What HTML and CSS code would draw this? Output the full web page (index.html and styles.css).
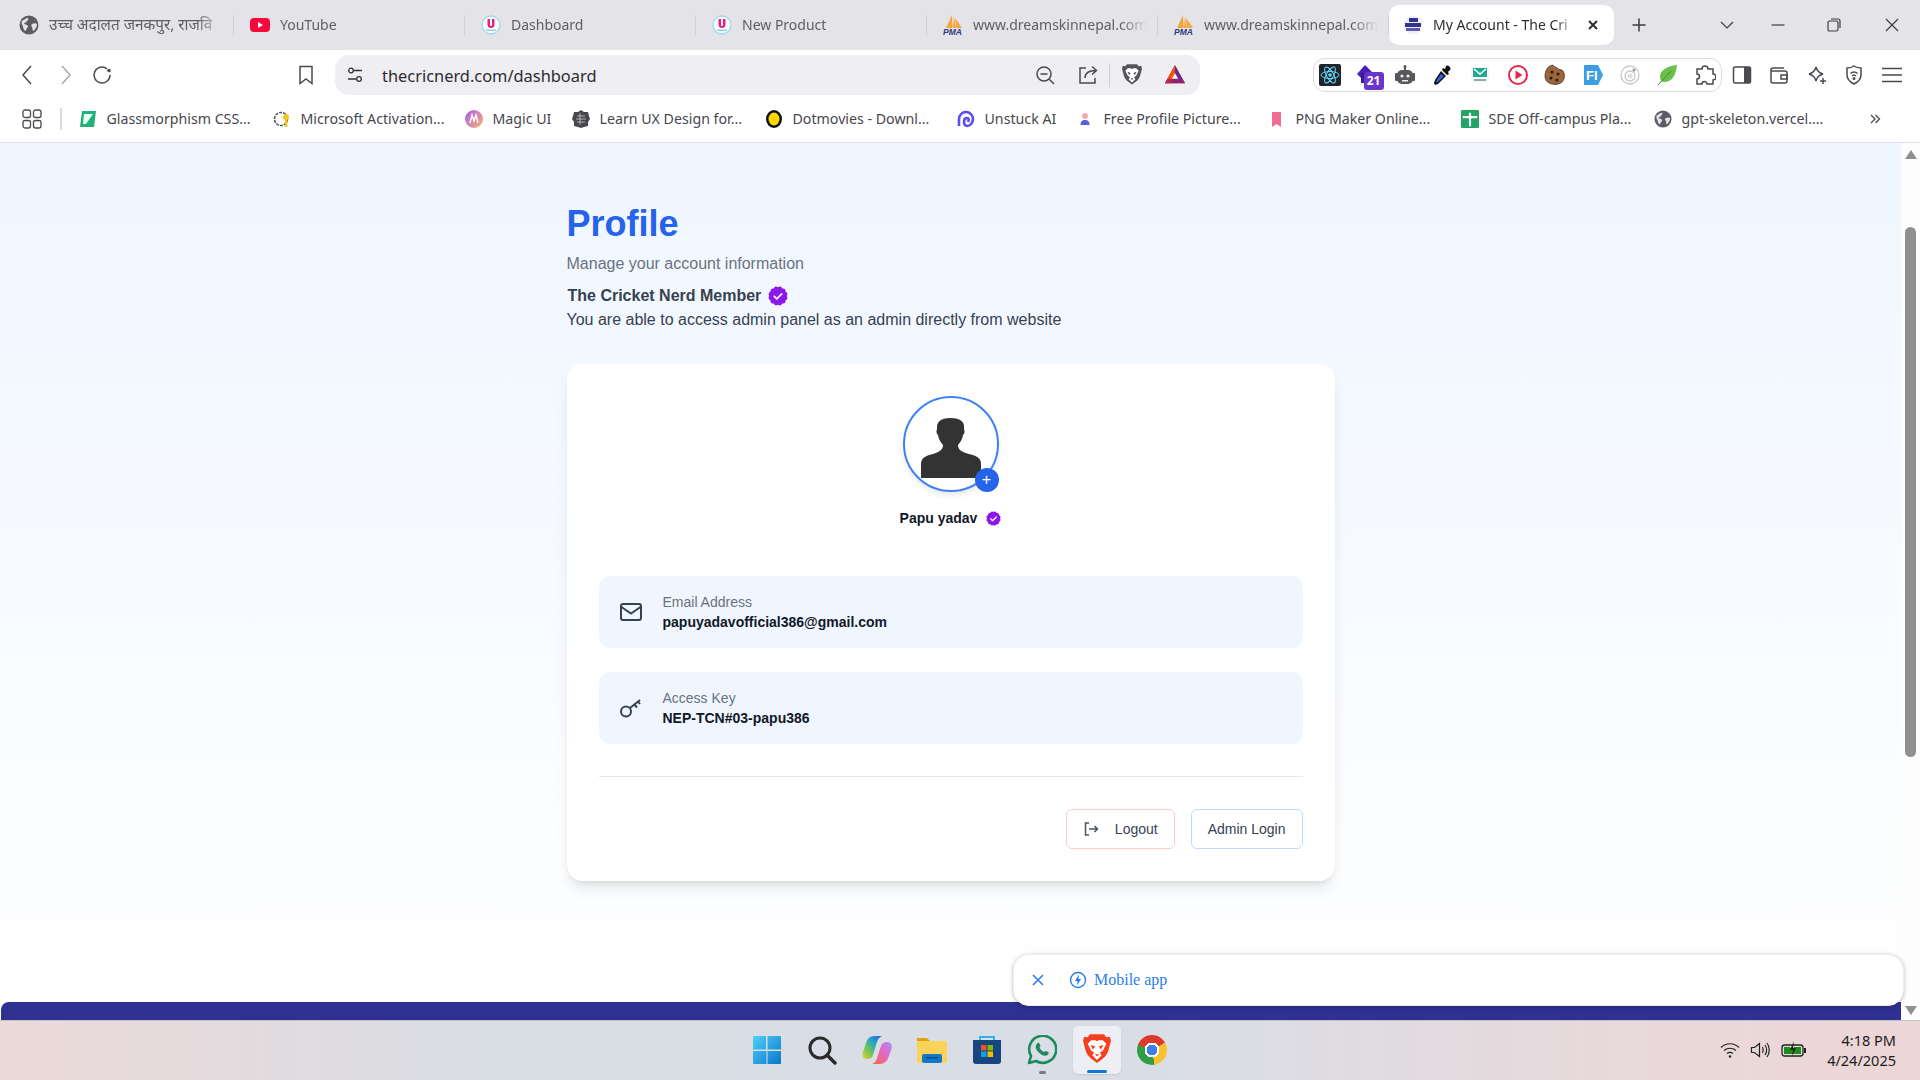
FILE: index.html
```html
<!DOCTYPE html>
<html lang="en">
<head>
<meta charset="utf-8">
<title>My Account - The Cricket Nerd</title>
<link rel="stylesheet" href="styles.css">
</head>
<body>
<svg class="defs" aria-hidden="true">
  <symbol id="globe" viewBox="0 0 20 20"><circle cx="10" cy="10" r="9.500" fill="#5c5c62"/><path d="M3 6c2-1 4-3 6-3 1 1 0 2-1 3s-1 2-3 2c0 2 3 1 4 3 0 2-2 2-2 5-2 0-3-3-3-5-1-1-2-3-1-5zM13 9c2-1 4-1 5 0 0 3-2 6-4 7-1-2 0-3-1-4s-1-2 0-3z" fill="#e3e3e8"/></symbol>
  <symbol id="ulogo" viewBox="0 0 20 20"><circle cx="10" cy="10" r="9" fill="#f4fbff" stroke="#9fd8ec" stroke-width="1.300"/><path d="M6.500 4v5.500c0 2.500 1.500 3.500 3.500 3.500s3.500-1 3.500-3.500V4H11v5.500c0 1-.4 1.500-1 1.500s-1-.5-1-1.500V4z" fill="#ee1f7c"/><rect x="5" y="14.500" width="10" height="1.500" fill="#9ccde0"/></symbol>
  <symbol id="pma" viewBox="0 0 20 20"><path d="M3 13 9 0l.5 13zM10 13l1-11 2 11zM13.500 13 12 3l7 10z" fill="#f6a53a"/><text x="0" y="19.500" class="pma-text">PMA</text></symbol>
  <symbol id="badge" viewBox="0 0 24 24"><g fill="#8d17ea"><rect x="3" y="3" width="18" height="18" rx="3"/><rect x="3" y="3" width="18" height="18" rx="3" transform="rotate(30 12 12)"/><rect x="3" y="3" width="18" height="18" rx="3" transform="rotate(60 12 12)"/></g><path d="m7.500 12.500 3 3 6-6" fill="none" stroke="#fff" stroke-width="2" stroke-linecap="round" stroke-linejoin="round"/></symbol>
  <symbol id="lion" viewBox="0 0 24 28"><path d="M6 1h12l2 2.500 3-.5 1 3.500-2 7.500c-1 4-3 6.500-6 8.500l-4 3-4-3c-3-2-5-4.500-6-8.500L0 6.500 1 3l3 .5z"/><path d="M7 6h3.500L12 7l1.500-1H17l3 3-3 6-2.500 1.500 1.500 2.500-4 4-4-4 1.500-2.500L7 15 4 9z" fill="#fff"/><path d="m6.500 10 4 1.500-2 2.500zM17.500 10l-4 1.500 2 2.500zM10 18h4l-2 2z"/></symbol>
</svg>

<div class="screen">
  <header class="tabbar">
    <div class="tab"><svg class="fav"><use href="#globe"/></svg><span class="tab-title tab-title-hi">उच्च अदालत जनकपुर, राजवि</span></div>
    <div class="tab"><svg class="fav" viewBox="0 0 20 20"><rect y="3" width="20" height="14" rx="4" fill="#f6093b"/><path d="m8 7 5 3-5 3z" fill="#fff"/></svg><span class="tab-title">YouTube</span></div>
    <div class="tab"><svg class="fav"><use href="#ulogo"/></svg><span class="tab-title">Dashboard</span></div>
    <div class="tab"><svg class="fav"><use href="#ulogo"/></svg><span class="tab-title">New Product</span></div>
    <div class="tab"><svg class="fav"><use href="#pma"/></svg><span class="tab-title">www.dreamskinnepal.com</span></div>
    <div class="tab"><svg class="fav"><use href="#pma"/></svg><span class="tab-title">www.dreamskinnepal.com</span></div>
    <div class="tab tab-active">
      <svg class="fav" viewBox="0 0 20 20"><circle cx="10" cy="10" r="9.500" fill="#f0f0f6"/><rect x="6" y="3" width="9" height="4" fill="#33338f"/><rect x="2" y="8" width="16" height="4" fill="#33338f"/><rect x="3" y="13" width="14" height="3" fill="#5a5ab0"/></svg>
      <span class="tab-title">My Account - The Cri</span>
      <svg class="tab-close" viewBox="0 0 12 12"><path d="m2 2 8 8M10 2l-8 8"/></svg>
    </div>
    <svg class="win-icon plus" viewBox="0 0 16 16"><path d="M8 1.500v13M1.500 8h13"/></svg>
    <svg class="win-icon chev" viewBox="0 0 16 16"><path d="m2 5 6 6 6-6"/></svg>
    <svg class="win-icon min" viewBox="0 0 16 16"><path d="M1.500 8h13"/></svg>
    <svg class="win-icon rest" viewBox="0 0 16 16"><rect x="2" y="4" width="10" height="10" rx="1.500"/><path d="M5 2h7a2 2 0 0 1 2 2v7"/></svg>
    <svg class="win-icon close" viewBox="0 0 16 16"><path d="m2 2 12 12M14 2 2 14"/></svg>
  </header>

  <nav class="toolbar">
    <button class="nav-btn"><svg class="ti" viewBox="0 0 20 20"><path d="m13 1-8 9 8 9"/></svg></button>
    <button class="nav-btn"><svg class="ti ti-off" viewBox="0 0 20 20"><path d="m7 1 8 9-8 9"/></svg></button>
    <button class="nav-btn"><svg class="ti" viewBox="0 0 20 20"><path d="M18 10a8 8 0 1 1-3-6.200"/><circle cx="17" cy="5.500" r="1.800" class="ti-dot"/></svg></button>
    <button class="nav-btn nav-mark"><svg class="ti" viewBox="0 0 20 20"><path d="M4 1.500h12v17L10 14l-6 4.500z"/></svg></button>
    <div class="omnibox">
      <svg class="tune" viewBox="0 0 18 18"><circle cx="5" cy="4.500" r="2.300"/><path d="M8 4.500h8M2 13h8"/><circle cx="13" cy="13" r="2.300"/></svg>
      <span class="url">thecricnerd.com/dashboard</span>
      <div class="omni-actions">
        <svg class="ti omni-zoom" viewBox="0 0 20 20"><circle cx="9" cy="9" r="7"/><path d="M5.500 9h7M14 14l5 5"/></svg>
        <svg class="ti omni-share" viewBox="0 0 20 20"><path d="M8 3H2v15h15v-5M7 13c0-5 4-7.500 11-7.500M14 1.500l4.500 4-4.500 4"/></svg>
        <span class="omni-sep"></span>
        <svg class="omni-shield"><use href="#lion" fill="#55555c"/></svg>
        <svg class="omni-bat" viewBox="0 0 24 24"><path d="M12 1 23 21H1z" fill="#662d91"/><path d="M12 1 1 21h6l5-9z" fill="#ff5000"/><path d="M1 21h22l-3-5H4z" fill="#9e1f63" opacity=".8"/><path d="m12 10-3.500 6h7z" fill="#fff"/></svg>
      </div>
    </div>
    <div class="ext-pill">
      <span class="ext"><svg viewBox="0 0 22 22"><rect width="22" height="22" rx="2" fill="#20232a"/><g fill="none" stroke="#61dafb"><ellipse cx="11" cy="11" rx="9" ry="3.500"/><ellipse cx="11" cy="11" rx="9" ry="3.500" transform="rotate(60 11 11)"/><ellipse cx="11" cy="11" rx="9" ry="3.500" transform="rotate(120 11 11)"/></g><circle cx="11" cy="11" r="1.800" fill="#61dafb"/></svg></span>
      <span class="ext"><svg viewBox="0 0 22 22"><path d="m0 10 8-9 8 8-8 9z" fill="#4a1fb8"/><rect x="4" y="9" width="14" height="10" fill="#3a1a90"/></svg><span class="ext-badge">21</span></span>
      <span class="ext"><svg viewBox="0 0 22 22"><circle cx="11" cy="2.500" r="1.500" fill="#555"/><rect x="10" y="3" width="2" height="4" fill="#555"/><rect x="1" y="9" width="3" height="8" rx="1" fill="#555"/><rect x="18" y="9" width="3" height="8" rx="1" fill="#555"/><rect x="3" y="6" width="16" height="14" rx="5" fill="#57575c"/><circle cx="8" cy="12" r="1.600" fill="#eee"/><circle cx="14" cy="12" r="1.600" fill="#eee"/><rect x="8" y="16" width="6" height="1.500" fill="#eee"/></svg></span>
      <span class="ext"><svg viewBox="0 0 22 22"><path d="M14 2c2-2 6 2 4 4l-2 2 1 2-2 1-5-5 1-2 2 1z" fill="#111"/><path d="m9 7 5 5-8 8-3 1-1-2 1-3z" fill="#111"/><path d="m9 10 3 2-6 6-2 .5.5-2z" fill="#3d5ee0"/></svg></span>
      <span class="ext"><svg viewBox="0 0 22 22"><rect x="2" y="3" width="18" height="15" fill="#f1f8f6"/><path d="M4 4h14v9H4z" fill="#21a98f"/><path d="m5 5 6 5 6-5" fill="none" stroke="#fff" stroke-width="1.400"/><rect x="5" y="15" width="12" height="2" fill="#8aa"/></svg></span>
      <span class="ext"><svg viewBox="0 0 22 22"><circle cx="11" cy="11" r="9" fill="none" stroke="#e5254b" stroke-width="2"/><path d="m8.500 6.500 7 4.500-7 4.500z" fill="#e5254b"/></svg></span>
      <span class="ext"><svg viewBox="0 0 22 22"><path d="M9 1c1 3 3 1 4 3 2 2 4 1 6 3 2 3 2 8-1 11s-9 3-13 1S0 12 2 7s4-5 7-6z" fill="#a1653a" stroke="#222" stroke-width=".7"/><g fill="#222"><circle cx="8" cy="8" r="1.600"/><circle cx="14" cy="10" r="1.600"/><circle cx="7" cy="14" r="1.600"/><circle cx="13" cy="16" r="1.600"/></g></svg></span>
      <span class="ext"><svg viewBox="0 0 22 22"><path d="M2 1h14l5 10-5 10H2z" fill="#3c9fe3"/><text x="4" y="16" class="ext-fi">FI</text></svg></span>
      <span class="ext"><svg viewBox="0 0 22 22"><g fill="none" stroke="#c8c8c8" stroke-width="1.300"><circle cx="11" cy="11" r="9"/><circle cx="11" cy="12" r="5"/></g><circle cx="11" cy="12" r="2.500" fill="#ddd"/><circle cx="15" cy="6" r="1.500" fill="#999"/></svg></span>
      <span class="ext"><svg viewBox="0 0 22 22"><path d="M20 1C10 2 3 6 3 13c0 2 1 4 3 5 8 1 13-6 14-17z" fill="#6cc04a"/><path d="M1 21 14 7" stroke="#3e8e2e" fill="none"/></svg></span>
      <span class="ext"><svg class="ti" viewBox="0 0 22 22"><path d="M8 5a3 3 0 0 1 6 0h5v5a3 3 0 0 1 0 6v4h-6a2.500 2.500 0 0 0-5 0H3v-5a2.500 2.500 0 0 0 0-5V5z"/></svg></span>
    </div>
    <div class="tool-actions">
      <span class="tool"><svg class="ti" viewBox="0 0 20 20"><rect x="1.500" y="2" width="17" height="16" rx="1.500"/><rect x="12" y="2" width="6.500" height="16" class="ti-dot"/></svg></span>
      <span class="tool"><svg class="ti" viewBox="0 0 20 20"><path d="M15 3H4a2 2 0 0 0-2 2v11a2 2 0 0 0 2 2h12a2 2 0 0 0 2-2V8a2 2 0 0 0-2-2H2"/><rect x="12" y="10" width="6" height="4"/></svg></span>
      <span class="tool"><svg class="ti" viewBox="0 0 20 20"><path d="M9 2c1 4 3 6 7 7-4 1-6 3-7 7-1-4-3-6-7-7 4-1 6-3 7-7z"/><path d="M16 13v6M13 16h6"/></svg></span>
      <span class="tool"><svg class="ti" viewBox="0 0 20 20"><path d="M10 1c2 1.500 4 2 7 2v7c0 4-3 7-7 9-4-2-7-5-7-9V3c3 0 5-.5 7-2z"/><path d="M6.500 8.500c2-2 5-2 7 0M8 11c1-1 3-1 4 0"/><circle cx="10" cy="13.500" r=".8"/></svg></span>
      <span class="tool"><svg class="ti" viewBox="0 0 20 20"><path d="M0 3.500h20M0 10h20M0 16.500h20"/></svg></span>
    </div>
  </nav>

  <div class="bookmarks">
    <svg class="apps" viewBox="0 0 20 20"><rect x="1" y="1" width="7.500" height="7.500" rx="2"/><rect x="11.500" y="1" width="7.500" height="7.500" rx="2"/><rect x="1" y="11.500" width="7.500" height="7.500" rx="2"/><rect x="11.500" y="11.500" width="7.500" height="7.500" rx="2"/></svg>
    <span class="bm-sep"></span>
    <div class="bm-grid">
      <a class="bm"><svg class="bm-ico" viewBox="0 0 18 18"><path d="M3 1h14l-2 16H1z" fill="#21b27a"/><path d="M5 4h9l-7 10H4z" fill="#eafff5"/></svg>Glassmorphism CSS...</a>
      <a class="bm"><svg class="bm-ico" viewBox="0 0 18 18"><circle cx="8" cy="9" r="6.500" fill="none" stroke="#555" stroke-width="1.600" stroke-dasharray="3 1"/><circle cx="13" cy="7" r="3" fill="#f5c518"/><rect x="12" y="8" width="2.400" height="9" fill="#f5c518"/></svg>Microsoft Activation...</a>
      <a class="bm"><svg class="bm-ico" viewBox="0 0 18 18"><defs><linearGradient id="gm" x1="0" y1="0" x2="1" y2="1"><stop offset="0" stop-color="#a65cf5"/><stop offset="1" stop-color="#ffb36b"/></linearGradient></defs><circle cx="9" cy="9" r="9" fill="url(#gm)"/><path d="M5 13 7 5l2 6 2-6 2 8" fill="none" stroke="#fff" stroke-width="1.400"/></svg>Magic UI</a>
      <a class="bm"><svg class="bm-ico" viewBox="0 0 18 18"><path d="M9 0l3 2 4 0 1 4 1 3-2 3 0 4-4 1-3 1-3-1-4-1 0-4-2-3 1-3 1-4 4 0z" fill="#47474c"/><path d="M5 6h8M4 9h10M5 12h8M8 3v12" stroke="#ddd" stroke-width=".7"/></svg>Learn UX Design for...</a>
      <a class="bm"><svg class="bm-ico" viewBox="0 0 18 18"><ellipse cx="9" cy="9" rx="8" ry="9" fill="#111"/><ellipse cx="9" cy="9" rx="5.500" ry="6.500" fill="#ffd600"/></svg>Dotmovies - Downl...</a>
      <a class="bm"><svg class="bm-ico" viewBox="0 0 18 18"><path d="M2 16V9a7 7 0 0 1 14 0c0 4-3 7-6 7-2 0-3-2-3-4s1-4 3-4 2 2 1 4" fill="none" stroke="#5a4df0" stroke-width="2.600"/></svg>Unstuck AI</a>
      <a class="bm"><svg class="bm-ico" viewBox="0 0 18 18"><circle cx="9" cy="6" r="3" fill="#f4a9b0"/><path d="M4.500 15c0-4 2-5 4.500-5s4.500 1 4.500 5z" fill="#5561e0"/></svg>Free Profile Picture...</a>
      <a class="bm"><svg class="bm-ico" viewBox="0 0 18 18"><path d="M4 2h9v15l-4.500-3L4 17z" fill="#f26b93"/></svg>PNG Maker Online...</a>
      <a class="bm"><svg class="bm-ico" viewBox="0 0 20 20"><rect width="20" height="20" rx="1.500" fill="#23a566"/><path d="M2 8h16M10 3v15" stroke="#fff" stroke-width="2.400"/></svg>SDE Off-campus Pla...</a>
      <a class="bm"><svg class="bm-ico"><use href="#globe"/></svg>gpt-skeleton.vercel....</a>
    </div>
    <svg class="bm-more" viewBox="0 0 12 12"><path d="m2 2 4 4-4 4M6.500 2l4 4-4 4"/></svg>
  </div>

  <div class="viewport">
    <div class="page">
      <main class="content">
        <h1 class="title">Profile</h1>
        <p class="subtitle">Manage your account information</p>
        <p class="member"><strong>The Cricket Nerd Member</strong><svg class="badge-lg"><use href="#badge"/></svg></p>
        <p class="access">You are able to access admin panel as an admin directly from website</p>

        <section class="card">
          <div class="avatar-wrap">
            <div class="avatar">
              <svg viewBox="2 2 92 92"><path d="M18 82V68c0-6 4-8 12-10 6-2 10-4 10-9-3-3-4.500-7-5-10-1.500-1-2-4-1-6-.5-7 3-11 13.500-11S62 26 61 33c1 2 .5 5-1 6-.5 3-2 7-5 10 0 5 4 7 11 9 8 2 12 4 12 10v14z" fill="#333"/></svg>
            </div>
            <span class="avatar-add">+</span>
          </div>
          <div class="name-row"><span class="name">Papu yadav</span><svg class="badge-sm"><use href="#badge"/></svg></div>

          <div class="info-row">
            <svg class="info-ico" viewBox="0 0 24 24"><rect x="2" y="4" width="20" height="16" rx="2"/><path d="m2.500 7 9.500 6.500L21.500 7"/></svg>
            <div><div class="info-label">Email Address</div><div class="info-value">papuyadavofficial386@gmail.com</div></div>
          </div>
          <div class="info-row">
            <svg class="info-ico" viewBox="0 0 24 24"><circle cx="7" cy="15.500" r="5"/><path d="m11 12 10-8M15.500 8.500l2.500 3M19 5.500l2 2.500"/></svg>
            <div><div class="info-label">Access Key</div><div class="info-value">NEP-TCN#03-papu386</div></div>
          </div>

          <div class="card-actions">
            <button class="btn btn-red"><svg class="btn-ico" viewBox="0 0 16 16"><path d="M6 2H2.500v12H6M6 8h8.500M11.500 5l3 3-3 3"/></svg>Logout</button>
            <button class="btn btn-blue">Admin Login</button>
          </div>
        </section>
      </main>
      <div class="footer-strip"></div>
    </div>
    <aside class="scrollbar">
      <span class="arrow-up"></span>
      <span class="thumb"></span>
      <span class="arrow-down"></span>
    </aside>
    <div class="popup">
      <svg class="popup-x" viewBox="0 0 14 14"><path d="m2 2 10 10M12 2 2 12"/></svg>
      <svg class="popup-bolt" viewBox="0 0 18 18"><circle cx="9" cy="9" r="7.500"/><path d="M10 3.500 6 10h2.500L8 14.500l4-6.500H9.500z" class="popup-fill"/></svg>
      <span class="popup-text">Mobile app</span>
    </div>
  </div>

  <footer class="taskbar">
    <div class="task-icons">
      <span class="task"><svg viewBox="0 0 30 30"><defs><linearGradient id="win" x1="0" y1="0" x2="1" y2="1"><stop offset="0" stop-color="#4fd0fb"/><stop offset="1" stop-color="#0a76c9"/></linearGradient></defs><path d="M1 2a1 1 0 0 1 1-1h12v13.500H1zM15.500 1H28a1 1 0 0 1 1 1v12.500H15.500zM1 16h13.500v13H2a1 1 0 0 1-1-1zM15.500 16H29v12a1 1 0 0 1-1 1H15.500z" fill="url(#win)"/></svg></span>
      <span class="task"><svg viewBox="0 0 30 30"><circle cx="13" cy="13" r="10" fill="none" stroke="#2a2a2a" stroke-width="3"/><path d="m20 20 8 8" stroke="#2a2a2a" stroke-width="3.400" stroke-linecap="round"/></svg></span>
      <span class="task"><svg viewBox="0 0 30 30"><defs><linearGradient id="co1" x1="0" y1="1" x2="1" y2="0"><stop offset="0" stop-color="#f2c83c"/><stop offset=".3" stop-color="#7fc94a"/><stop offset=".65" stop-color="#1fa3c9"/><stop offset="1" stop-color="#2a5ce0"/></linearGradient><linearGradient id="co2" x1="0" y1="1" x2="1" y2="0"><stop offset="0" stop-color="#f5663c"/><stop offset=".6" stop-color="#e06ad0"/><stop offset="1" stop-color="#a98df5"/></linearGradient></defs><path d="M12 1h8c-3 1-5 4-6 9l-3 10c-1 3-3 4-6 4-4 0-5-3-4-7l3-9c1-4 4-7 8-7z" fill="url(#co1)"/><path d="M18 29h-8c3-1 5-4 6-9l3-9c1-3 3-4 6-4 4 0 5.500 3 4.500 7l-3 8c-1 4-4.500 7-8.500 7z" fill="url(#co2)"/></svg></span>
      <span class="task"><svg viewBox="0 0 30 30"><path d="M0 3h10l3 3h17v6H0z" fill="#e0a208"/><rect y="6" width="30" height="22" fill="#fbd35a"/><rect x="5" y="19" width="20" height="9" rx="2" fill="#1277c9"/><rect x="9" y="22" width="12" height="1.500" fill="#0b4a86"/></svg></span>
      <span class="task"><svg viewBox="0 0 30 30"><path d="M8 6V2h14v4" fill="none" stroke="#27b5ea" stroke-width="1.800"/><path d="M1 5h28v21a3 3 0 0 1-3 3H4a3 3 0 0 1-3-3z" fill="#17457f"/><rect x="9" y="10" width="5.500" height="5.500" fill="#f25022"/><rect x="15.500" y="10" width="5.500" height="5.500" fill="#7fba00"/><rect x="9" y="16.500" width="5.500" height="5.500" fill="#00a4ef"/><rect x="15.500" y="16.500" width="5.500" height="5.500" fill="#ffb900"/></svg></span>
      <span class="task task-running"><svg viewBox="0 0 30 30"><path d="M2 28l2-7a13.500 13.500 0 1 1 5 5z" fill="none" stroke="#1c8a5c" stroke-width="2.600" stroke-linejoin="round"/><path d="M10 8.500c1-1 2-1 2.500 0l1 2.500-1 1.500c1 2 2.500 3.500 4.500 4.500l1.500-1 2.500 1c1 .5 1 1.500 0 2.500-2 2-5 1.500-8-1s-5-5-4-8c.2-.8.7-1.500 1.500-2.500z" fill="#1c8a5c"/></svg></span>
      <span class="task task-active"><svg class="task-lion"><use href="#lion" fill="#f4401f"/></svg></span>
      <span class="task"><span class="chrome"></span></span>
    </div>
    <div class="tray">
      <svg class="tray-ico" viewBox="0 0 20 20"><path d="M1 7.500c5-5 13-5 18 0M4 10.500c3.500-3 8.500-3 12 0M7 13.500c2-1.500 4-1.500 6 0"/><circle cx="10" cy="16.500" r="1.200" class="tray-fill"/></svg>
      <svg class="tray-ico" viewBox="0 0 20 20"><path d="M1.500 7.500h3l5-4v13l-5-4h-3zM12.500 7c1 2 1 4 0 6M15 5c2 3 2 7 0 10M17 3c3 4 3 10 0 14"/></svg>
      <svg class="tray-bat" viewBox="0 0 26 18"><rect x="1" y="4" width="21" height="11" rx="2.500" fill="none" stroke="#222" stroke-width="1.300"/><rect x="23" y="7" width="2" height="5" fill="#222"/><path d="M3 6h6l2 3 2-3h7v7H3z" fill="#1b8f1b"/><path d="M13 0 9 9h3l-1 6 4-8h-3z" fill="#222"/></svg>
      <div class="clock"><div>4:18 PM</div><div>4/24/2025</div></div>
    </div>
  </footer>
</div>
</body>
</html>
```
FILE: styles.css
```css
* { box-sizing: border-box; }
html, body { margin: 0; padding: 0; height: 100%; overflow: hidden; }
body { font-family: "Liberation Sans", Arial, sans-serif; background: #fff; }
.defs { display: none; }
.screen { width: 1920px; height: 1080px; display: flex; flex-direction: column; overflow: hidden; }

/* tab strip */
.tabbar { height: 50px; flex: none; background: #e3e3e8; display: flex; align-items: center; padding-left: 3px; font-family: "Noto Sans", sans-serif; font-size: 14px; color: #5e5e64; }
.tab { width: 231px; height: 20px; flex: none; display: flex; align-items: center; gap: 10px; padding-left: 16px; padding-right: 10px; border-right: 1px solid #cfcfd5; white-space: nowrap; }
.fav { width: 20px; height: 20px; flex: none; }
.tab-title { display: block; flex: 1; min-width: 0; padding-bottom: 2px; overflow: hidden; -webkit-mask-image: linear-gradient(to right, #000 85%, transparent); mask-image: linear-gradient(to right, #000 85%, transparent); }
.tab-title-hi { font-size: 15.300px; }
.tab-active { width: 225px; height: 40px; background: #fff; border: 0; border-radius: 10px; padding-left: 14px; padding-right: 15px; color: #2e2e33; }
.tab-close { width: 12px; height: 12px; flex: none; fill: none; stroke: #2e2e33; stroke-width: 2; }
.pma-text { font: italic bold 8.500px "Liberation Sans", sans-serif; fill: #2e3a7c; }
.win-icon { width: 16px; height: 16px; flex: none; fill: none; stroke: #3c3c42; stroke-width: 1.200; }
.plus { margin-left: 17px; stroke-width: 1.500; }
.chev { margin-left: 72px; }
.min { margin-left: 35px; }
.rest { margin-left: 40px; }
.close { margin-left: 42px; }

/* toolbar */
.toolbar { height: 45px; flex: none; padding: 5px 0 0 9.500px; display: flex; align-items: center; background: #fff; }
.nav-btn { width: 37px; height: 40px; padding: 0; border: 0; background: none; display: flex; align-items: center; justify-content: center; flex: none; }
.ti { width: 20px; height: 20px; fill: none; stroke: #4a4a50; stroke-width: 1.500; flex: none; }
.ti-off { stroke: #a9a9ae; }
.ti-dot { fill: #4a4a50; stroke: none; }
.nav-mark { margin-left: 167px; }
.omnibox { width: 865px; height: 40px; margin-left: 10.500px; flex: none; background: #eeeef3; border-radius: 14px; display: flex; align-items: center; padding: 0 14px 0 11px; }
.tune { width: 18px; height: 18px; flex: none; fill: none; stroke: #333; stroke-width: 1.300; }
.url { margin-left: 18px; font-family: "Noto Sans", sans-serif; font-size: 16.400px; color: #2c2c30; }
.omni-actions { margin-left: auto; display: flex; align-items: center; }
.omni-share { margin-left: 23px; }
.omni-sep { width: 1px; height: 24px; margin-left: 11px; background: #d0d0d6; }
.omni-shield { width: 20px; height: 24px; margin-left: 12px; }
.omni-bat { width: 22px; height: 22px; margin-left: 22px; }
.ext-pill { width: 409px; height: 34px; margin-left: 113px; flex: none; border: 1px solid #dcdce0; border-radius: 12px; display: flex; align-items: center; justify-content: space-between; }
.ext { width: 32px; height: 22px; flex: none; display: flex; justify-content: center; position: relative; }
.ext svg { width: 22px; height: 22px; }
.ext-badge { position: absolute; left: 12px; top: 8px; width: 20px; height: 18px; background: #6a35c9; color: #fff; font: bold 12px/18px "Noto Sans", sans-serif; text-align: center; border-radius: 3px; }
.ext-fi { font: bold 13px "Liberation Sans", sans-serif; fill: #fff; }
.tool-actions { display: flex; margin-left: 1px; }
.tool { width: 37.500px; display: flex; justify-content: center; }

/* bookmarks */
.bookmarks { height: 48px; flex: none; display: flex; align-items: center; background: #fff; border-bottom: 1px solid #dfdfe6; padding-left: 22px; font-family: "Noto Sans", sans-serif; font-size: 14.200px; color: #47474d; }
.apps { width: 20px; height: 20px; flex: none; fill: none; stroke: #4a4a50; stroke-width: 1.300; }
.bm-sep { width: 2px; height: 22px; margin-left: 18px; background: #dcdce0; flex: none; }
.bm-grid { margin-left: 17px; display: grid; grid-template-columns: 194px 192px 107px 193px 192px 119px 192px 193px 193px 196px; }
.bm { display: flex; align-items: center; gap: 9.500px; white-space: nowrap; }
.bm-ico { width: 18px; height: 18px; flex: none; }
.bm-more { width: 12px; height: 12px; flex: none; margin-left: 19px; fill: none; stroke: #4a4a50; stroke-width: 1.300; }

/* page */
.viewport { flex: 1; min-height: 0; display: flex; position: relative; }
.page { flex: 1; min-width: 0; display: flex; flex-direction: column; background: linear-gradient(to bottom, #eff6ff, #fff); }
.content { flex: 1; width: 768px; margin: 0 auto; padding-top: 61px; }
.title { margin: 0 0 8px; font-size: 36px; line-height: 40px; font-weight: 700; color: #2563eb; }
.subtitle { margin: 0 0 8px; font-size: 16px; line-height: 24px; color: #6b7280; }
.member { margin: 0; padding-left: 1px; font-size: 16px; line-height: 24px; color: #374151; display: flex; align-items: center; gap: 7px; }
.badge-lg { width: 20px; height: 20px; }
.access { margin: 0 0 32px; font-size: 16px; line-height: 24px; color: #374151; }
.card { background: #fff; border-radius: 16px; padding: 32px; box-shadow: 0 10px 15px -3px rgba(0,0,0,.1), 0 4px 6px -4px rgba(0,0,0,.1); }
.avatar-wrap { width: 96px; height: 96px; margin: 0 auto; position: relative; }
.avatar { width: 96px; height: 96px; border: 2px solid #3b82f6; border-radius: 50%; overflow: hidden; background: #fff; box-shadow: 0 4px 6px -1px rgba(0,0,0,.1); }
.avatar svg { display: block; width: 92px; height: 92px; }
.avatar-add { position: absolute; left: 72px; top: 72px; width: 24px; height: 24px; border-radius: 50%; background: #2563eb; color: #fff; font-size: 16px; line-height: 24px; text-align: center; }
.name-row { margin-top: 16px; height: 20px; display: flex; align-items: center; justify-content: center; gap: 9px; }
.name { font-size: 14px; line-height: 20px; font-weight: 700; color: #111827; }
.badge-sm { width: 15px; height: 15px; }
.info-row { height: 72px; margin-top: 24px; padding: 0 20px; background: #eff6ff; border-radius: 12px; display: flex; align-items: center; gap: 20px; }
.name-row + .info-row { margin-top: 48px; }
.info-ico { width: 24px; height: 24px; flex: none; fill: none; stroke: #374151; stroke-width: 2; }
.info-label { font-size: 14px; line-height: 20px; color: #6b7280; }
.info-value { font-size: 14px; line-height: 20px; font-weight: 700; color: #111827; }
.card-actions { margin-top: 32px; padding-top: 32px; border-top: 1px solid #e5e7eb; display: flex; justify-content: flex-end; gap: 16px; }
.btn { height: 40px; padding: 0 16px; background: #fff; border-radius: 6px; font: 14px "Liberation Sans", sans-serif; color: #374151; display: flex; align-items: center; gap: 16px; }
.btn-red { border: 1px solid #fecaca; }
.btn-blue { border: 1px solid #bfdbfe; }
.btn-ico { width: 16px; height: 16px; fill: none; stroke: #4b5563; stroke-width: 1.500; }
.footer-strip { height: 18px; flex: none; margin-left: 1px; background: #2e3192; border-top-left-radius: 8px; }

/* scrollbar */
.scrollbar { width: 19px; flex: none; background: #fdfdfd; display: flex; flex-direction: column; align-items: center; padding-top: 7px; }
.arrow-up { width: 0; height: 0; border-left: 6.500px solid transparent; border-right: 6.500px solid transparent; border-bottom: 9px solid #8f8f8f; }
.thumb { width: 11px; height: 530px; margin-top: 68px; background: #8f8f8f; border-radius: 6px; }
.arrow-down { width: 0; height: 0; margin-top: 249px; border-left: 6.500px solid transparent; border-right: 6.500px solid transparent; border-top: 9px solid #8f8f8f; }

/* floating banner */
.popup { position: absolute; left: 1013px; top: 811px; width: 891px; height: 52px; background: #fff; border: 1px solid #eeeeee; border-radius: 16px; box-shadow: 0 1px 4px rgba(0,0,0,.25); display: flex; align-items: center; padding-left: 17px; font-family: "Liberation Serif", serif; font-size: 16px; color: #2b7de9; }
.popup-x { width: 14px; height: 14px; flex: none; fill: none; stroke: #2b7de9; stroke-width: 1.600; }
.popup-bolt { width: 18px; height: 18px; flex: none; margin-left: 24px; fill: none; stroke: #2b7de9; stroke-width: 1.400; }
.popup-fill { fill: #2b7de9; stroke: none; }
.popup-text { margin-left: 7px; }

/* taskbar */
.taskbar { height: 60px; flex: none; border-top: 1px solid #c4c2c6; display: flex; align-items: center; padding: 0 0 2px 739.500px; background: linear-gradient(to right, #ecd9d8 0%, #d9dde4 25%, #d9dee6 60%, #ead8d9 88%, #ecd6d6 100%); }
.task-icons { display: flex; }
.task { width: 55px; height: 48px; position: relative; display: flex; align-items: center; justify-content: center; flex: none; }
.task svg { width: 30px; height: 30px; }
.task svg.task-lion { width: 28px; height: 33px; }
.task-running::after { content: ""; position: absolute; left: 24px; bottom: 0; width: 7px; height: 3px; border-radius: 2px; background: #7a7a7f; }
.task-active { width: 48px; margin: 0 3.500px; background: #edeff4; border-radius: 5px; box-shadow: 0 1px 2px rgba(0,0,0,.1); }
.task-active::after { content: ""; position: absolute; left: 14px; bottom: 1px; width: 20px; height: 3px; border-radius: 2px; background: #0f78d4; }
.chrome { width: 30px; height: 30px; border-radius: 50%; background: radial-gradient(circle, #3f7ee8 0 5.500px, #fff 5.500px 7.500px, transparent 7.500px), conic-gradient(from 290deg, #dd3a2c 0 130deg, #fbc02d 130deg 240deg, #2f9e44 240deg 360deg); }
.tray { margin-left: auto; display: flex; align-items: center; padding-right: 24px; }
.tray-ico { width: 20px; height: 20px; flex: none; margin-right: 10px; fill: none; stroke: #222; stroke-width: 1.200; }
.tray-fill { fill: #222; stroke: none; }
.tray-bat { width: 26px; height: 18px; flex: none; margin-left: 1px; }
.clock { margin-left: 20px; font-family: "Noto Sans", sans-serif; font-size: 14.500px; line-height: 20px; color: #1c1c1e; text-align: right; }
```
